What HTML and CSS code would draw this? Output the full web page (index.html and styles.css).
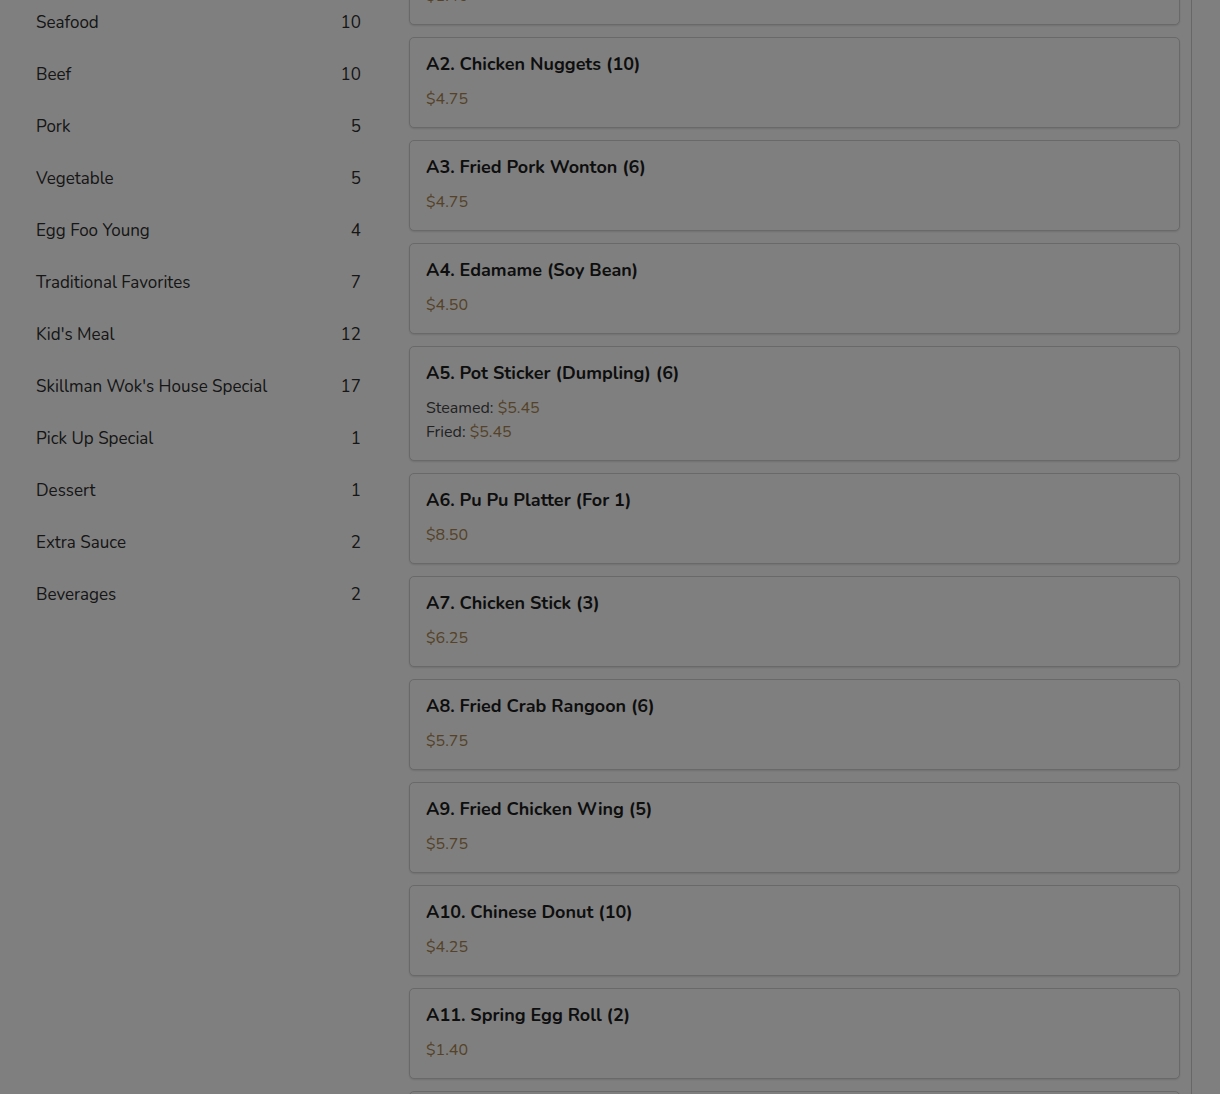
FILE: index.html
```html
<!DOCTYPE html>
<html lang="en">
<head>
<meta charset="utf-8">
<title>Skillman Wok Menu</title>
<link rel="stylesheet" href="styles.css">
</head>
<body>
<div class="page">
  <aside class="sidebar">
    <a class="cat"><span>Seafood</span><span>10</span></a>
    <a class="cat"><span>Beef</span><span>10</span></a>
    <a class="cat"><span>Pork</span><span>5</span></a>
    <a class="cat"><span>Vegetable</span><span>5</span></a>
    <a class="cat"><span>Egg Foo Young</span><span>4</span></a>
    <a class="cat"><span>Traditional Favorites</span><span>7</span></a>
    <a class="cat"><span>Kid's Meal</span><span>12</span></a>
    <a class="cat"><span>Skillman Wok's House Special</span><span>17</span></a>
    <a class="cat"><span>Pick Up Special</span><span>1</span></a>
    <a class="cat"><span>Dessert</span><span>1</span></a>
    <a class="cat"><span>Extra Sauce</span><span>2</span></a>
    <a class="cat"><span>Beverages</span><span>2</span></a>
  </aside>
  <main class="menu">
    <div class="items">
      <div class="card"><div class="name">A1. Egg Roll (1)</div><div class="price">$1.40</div></div>
      <div class="card"><div class="name">A2. Chicken Nuggets (10)</div><div class="price">$4.75</div></div>
      <div class="card"><div class="name">A3. Fried Pork Wonton (6)</div><div class="price">$4.75</div></div>
      <div class="card"><div class="name">A4. Edamame (Soy Bean)</div><div class="price">$4.50</div></div>
      <div class="card"><div class="name">A5. Pot Sticker (Dumpling) (6)</div><div class="price"><span class="label">Steamed:</span> $5.45</div><div class="price"><span class="label">Fried:</span> $5.45</div></div>
      <div class="card"><div class="name">A6. Pu Pu Platter (For 1)</div><div class="price">$8.50</div></div>
      <div class="card"><div class="name">A7. Chicken Stick (3)</div><div class="price">$6.25</div></div>
      <div class="card"><div class="name">A8. Fried Crab Rangoon (6)</div><div class="price">$5.75</div></div>
      <div class="card"><div class="name">A9. Fried Chicken Wing (5)</div><div class="price">$5.75</div></div>
      <div class="card"><div class="name">A10. Chinese Donut (10)</div><div class="price">$4.25</div></div>
      <div class="card"><div class="name">A11. Spring Egg Roll (2)</div><div class="price">$1.40</div></div>
      <div class="card"><div class="name">A12. Teriyaki Chicken (4)</div><div class="price">$6.25</div></div>
    </div>
  </main>
</div>
<div class="overlay"></div>
</body>
</html>
```
FILE: styles.css
```css
html, body {
  margin: 0;
  padding: 0;
  height: 100%;
  overflow: hidden;
  background: #fff;
  font-family: "Nunito", Lato, "Noto Sans", sans-serif;
}
.page {
  display: flex;
  align-items: flex-start;
  margin-top: -66px;
}
.sidebar {
  width: 325px;
  margin-left: 36px;
  padding-top: 62px;
  display: flex;
  flex-direction: column;
}
.cat {
  display: flex;
  justify-content: space-between;
  align-items: center;
  height: 52px;
  font-size: 17px;
  color: #2c2c2c;
}
.menu {
  margin-left: 48px;
  width: 782px;
  border-right: 1px solid #cfcfcf;
  min-height: 1300px;
}
.items {
  width: 771px;
  display: flex;
  flex-direction: column;
  gap: 12px;
}
.card {
  border: 1px solid #d2d2d2;
  border-radius: 5px;
  box-shadow: 0 1px 2px rgba(0,0,0,0.12);
  padding: 14px 16px 16px;
  background: #fff;
}
.name {
  font-size: 18px;
  font-weight: 700;
  line-height: 24px;
  color: #1c1c1c;
  margin-bottom: 11px;
}
.price {
  font-size: 16px;
  line-height: 24px;
  color: #aa8550;
}
.label {
  color: #444;
}
.overlay {
  position: fixed;
  inset: 0;
  background: rgba(0,0,0,0.5);
}
```
